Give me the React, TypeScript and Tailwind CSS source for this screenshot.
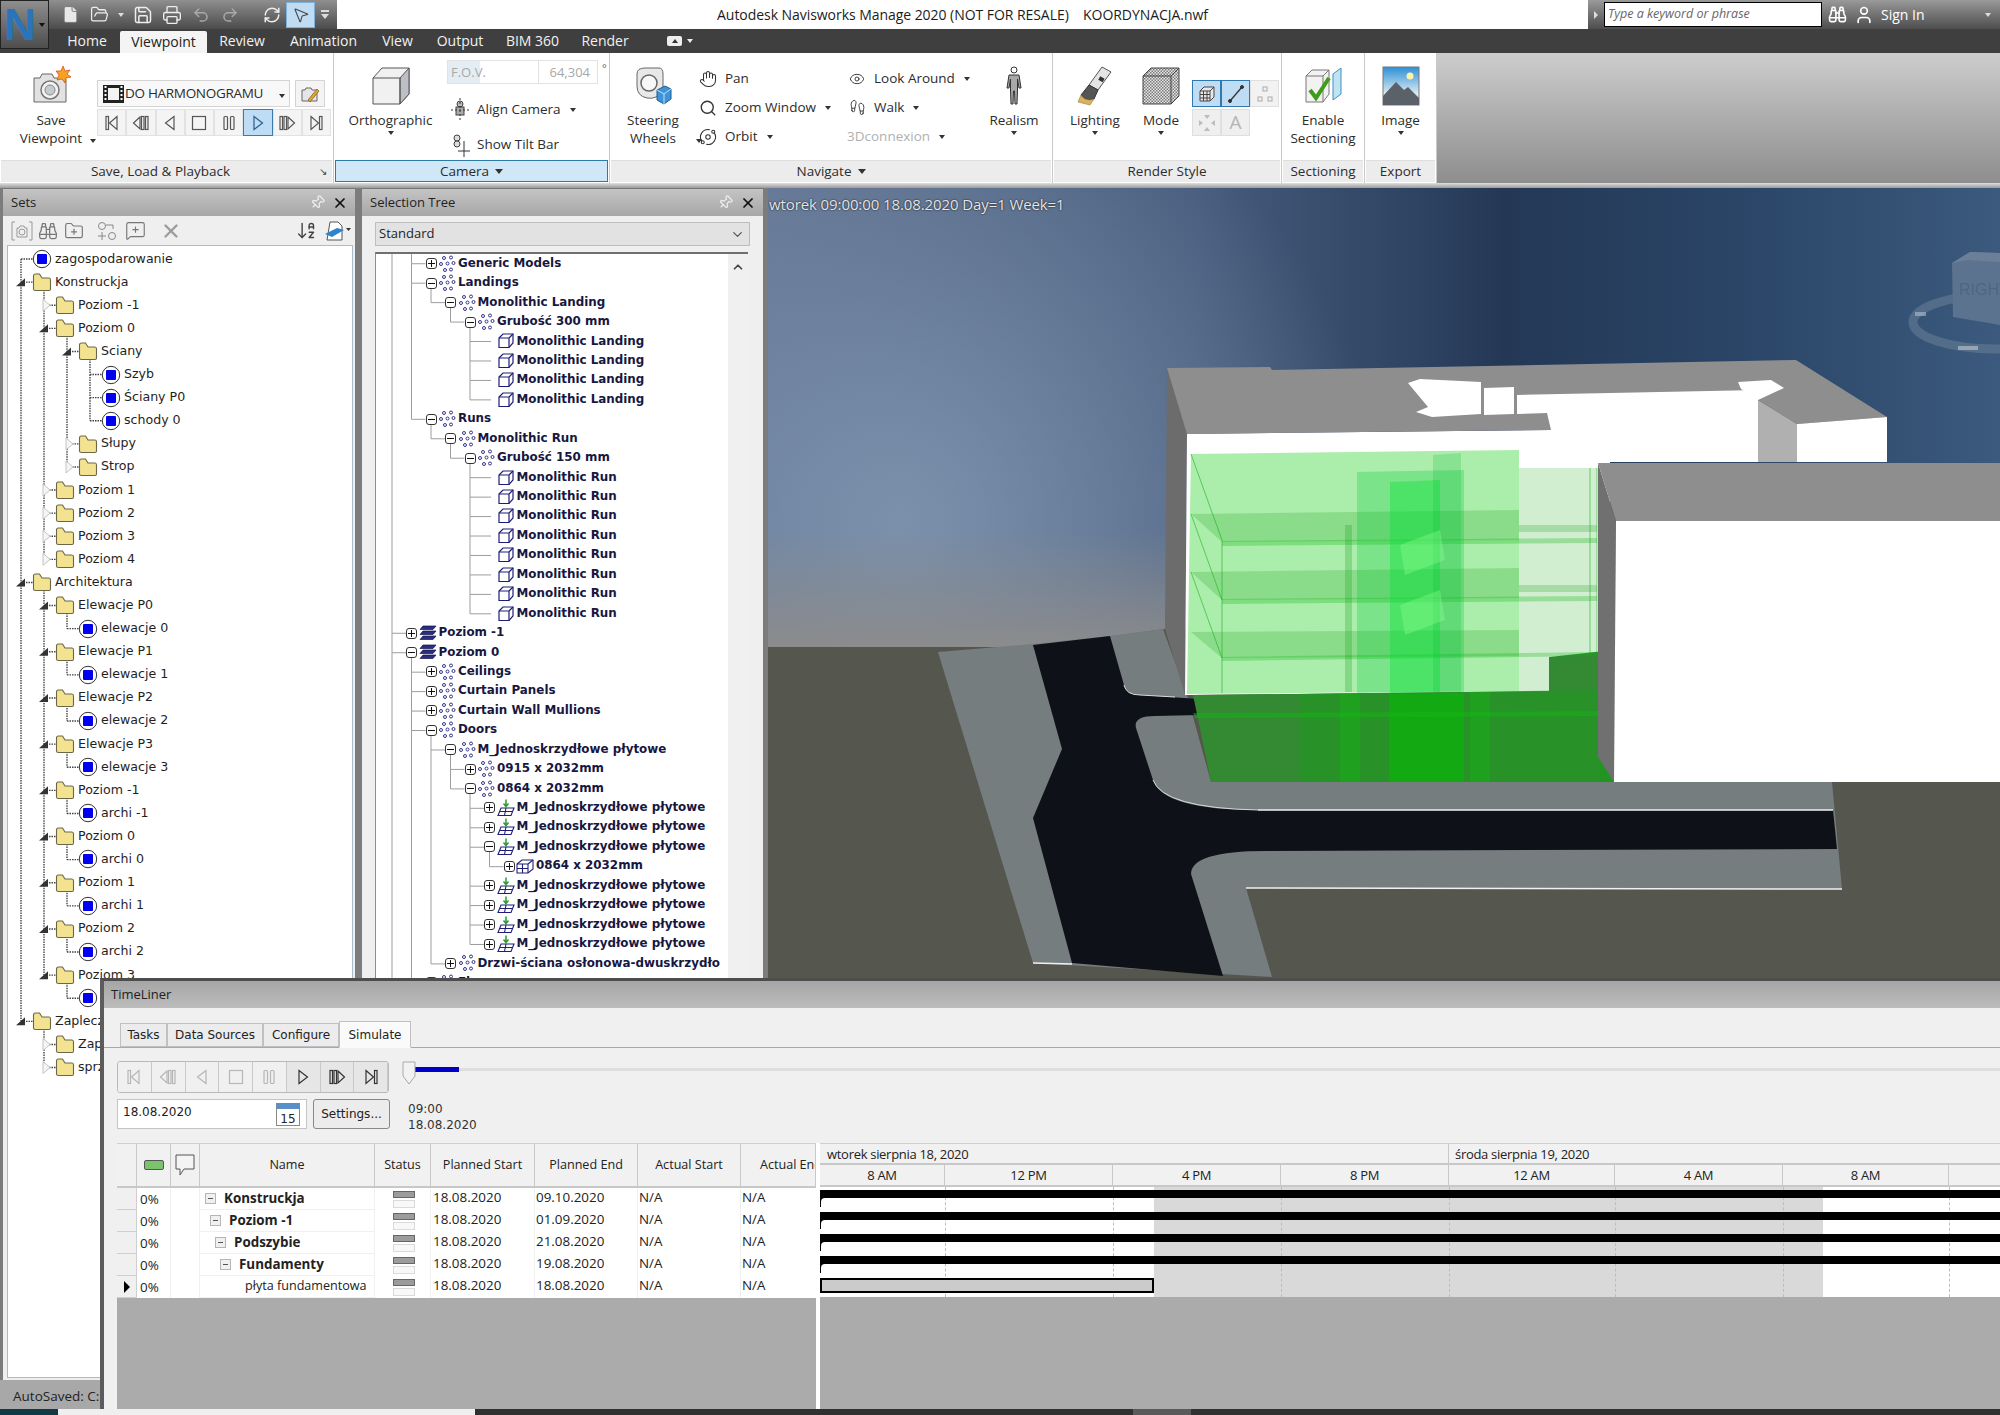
import type { ReactNode } from "react";
import {
  Binoculars, ChevronDown, ChevronUp, File, FolderOpen, FolderPlus, Hand, MessageSquarePlus, MousePointer2, Pin, Printer,
  Redo2, RefreshCw, Save, Search, Undo2, User, X, ArrowDownAZ, Footprints, Eye, Orbit,
} from "lucide-react";

const caret = <span className="inline-block w-0 h-0 border-x-[3px] border-x-transparent border-t-[4px] border-t-[#333]" />;

type Kind = "first" | "prev" | "back" | "stop" | "pause" | "play" | "next" | "last";

function Transport({ kind, color = "#444" }: { kind: Kind; color?: string }) {
  const p = { fill: "none", stroke: color, strokeWidth: 1.2 };
  return (
    <svg width="20" height="20" viewBox="0 0 20 20">
      {kind === "first" && <g {...p}><rect x="4" y="3.5" width="2.5" height="13" /><path d="M15 3.5 L7.5 10 L15 16.5 Z" /></g>}
      {kind === "prev" && <g {...p}><path d="M9 4 L2.5 10 L9 16 Z" /><rect x="10.5" y="3.5" width="2.5" height="13" /><rect x="14.5" y="3.5" width="2.5" height="13" /></g>}
      {kind === "back" && <path {...p} d="M14 3.5 L5.5 10 L14 16.5 Z" />}
      {kind === "stop" && <rect {...p} x="3.5" y="3.5" width="13" height="13" />}
      {kind === "pause" && <g {...p}><rect x="5" y="3.5" width="3.5" height="13" rx="1" /><rect x="11.5" y="3.5" width="3.5" height="13" rx="1" /></g>}
      {kind === "play" && <path {...p} d="M6 3.5 L14.5 10 L6 16.5 Z" />}
      {kind === "next" && <g {...p}><rect x="3" y="3.5" width="2.5" height="13" /><rect x="7" y="3.5" width="2.5" height="13" /><path d="M11 4 L17.5 10 L11 16 Z" /></g>}
      {kind === "last" && <g {...p}><path d="M5 3.5 L12.5 10 L5 16.5 Z" /><rect x="13.5" y="3.5" width="2.5" height="13" /></g>}
    </svg>
  );
}

const kinds: Kind[] = ["first", "prev", "back", "stop", "pause", "play", "next", "last"];

function CameraIcon() {
  return (
    <svg width="40" height="40" viewBox="0 0 40 40">
      <path d="M3 12 L9 12 L11 8 L21 8 L23 12 L33 12 Q35 12 35 14 L35 36 L3 36 Z" fill="#e2e2e2" stroke="#666" />
      <circle cx="19" cy="24" r="9" fill="#f2f2f2" stroke="#777" strokeWidth="1.5" />
      <circle cx="19" cy="24" r="5" fill="#c4ccd0" stroke="#888" />
      <path d="M32 0 L34 5 L39 4 L36 8 L40 11 L35 12 L34 17 L31 13 L26 14 L28 9 L25 5 L30 5 Z" fill="#f6a11f" stroke="#d9401c" strokeWidth=".7" />
    </svg>
  );
}

function OrthoIcon() {
  return (
    <svg width="40" height="40" viewBox="0 0 40 40">
      <path d="M2 12 L11 2 L38 2 L38 28 L29 38 L2 38 Z" fill="#f1f1f1" stroke="#555" />
      <path d="M29 12 L38 2 L38 28 L29 38 Z" fill="#bcc0c6" stroke="#555" />
      <path d="M2 12 L29 12 L29 38" fill="none" stroke="#555" />
    </svg>
  );
}

function WheelIcon() {
  return (
    <svg width="40" height="40" viewBox="0 0 40 40">
      <path d="M4 8 Q4 2 12 2 L26 2 Q30 2 30 8 L30 24 Q24 34 14 32 Q4 30 4 20 Z" fill="#e8e8e8" stroke="#666" />
      <circle cx="16" cy="17" r="8" fill="#f7f7f7" stroke="#666" strokeWidth="1.5" />
      <path d="M24 24 L32 20 L38 23 L38 33 L31 38 L24 34 Z" fill="#3f93d8" stroke="#1c5b91" />
      <path d="M24 24 L31 28 L38 23 M31 28 L31 38" fill="none" stroke="#bfe0f7" />
    </svg>
  );
}

function PersonIcon() {
  return (
    <svg width="24" height="40" viewBox="0 0 24 40" fill="none" stroke="#333">
      <circle cx="12" cy="4" r="3" />
      <path d="M7 9 L17 9 L19 22 L17 22 L15.5 13 L15.5 24 L15 38 L13 38 L12.5 25 L11.5 25 L11 38 L9 38 L8.5 24 L8.5 13 L7 22 L5 22 Z" fill="#a8a8a8" />
    </svg>
  );
}

function TorchIcon() {
  return (
    <svg width="40" height="40" viewBox="0 0 40 40">
      <path d="M27 1 L36 6 L23 24 L14 19 Z" fill="#e4e4e4" stroke="#555" />
      <path d="M14 19 L23 24 L19 33 Q10 36 6 29 Z" fill="#555" stroke="#333" />
      <path d="M6 29 Q10 36 19 33 L15 39 L3 36 Z" fill="#d8b25e" stroke="#9b7c38" strokeWidth=".6" />
      <rect x="24" y="11" width="5" height="4" fill="#333" transform="rotate(30 26 13)" />
    </svg>
  );
}

function ModeIcon() {
  return (
    <svg width="40" height="40" viewBox="0 0 40 40">
      <defs>
        <pattern id="check" width="3" height="3" patternUnits="userSpaceOnUse">
          <rect width="3" height="3" fill="#e6e6e6" />
          <rect width="1.5" height="1.5" fill="#7b7b7b" />
          <rect x="1.5" y="1.5" width="1.5" height="1.5" fill="#7b7b7b" />
        </pattern>
      </defs>
      <path d="M2 10 L10 2 L38 2 L38 30 L30 38 L2 38 Z" fill="url(#check)" stroke="#444" />
      <path d="M2 10 L30 10 L30 38 M30 10 L38 2" fill="none" stroke="#444" />
    </svg>
  );
}

function SectionIcon() {
  return (
    <svg width="40" height="36" viewBox="0 0 40 36">
      <path d="M3 8 L9 2 L26 2 L26 26 L20 34 L3 34 Z" fill="#f2f2f2" stroke="#777" />
      <path d="M3 8 L20 8 L20 34 M20 8 L26 2" fill="none" stroke="#777" />
      <path d="M30 6 L38 0 L38 26 L30 32 Z" fill="#bfe3f3" stroke="#3f8fc0" />
      <path d="M7 22 L13 30 L26 10" fill="none" stroke="#3f9c1b" strokeWidth="4" />
    </svg>
  );
}

function PictureIcon() {
  return (
    <svg width="38" height="40" viewBox="0 0 38 40">
      <defs>
        <linearGradient id="skyg" x1="0" y1="0" x2="0" y2="1">
          <stop offset="0" stopColor="#2e8fd6" />
          <stop offset=".7" stopColor="#d9eaf3" />
        </linearGradient>
      </defs>
      <rect x="1" y="1" width="36" height="38" fill="url(#skyg)" stroke="#777" />
      <circle cx="28" cy="10" r="3.5" fill="#fbf2b0" />
      <path d="M1 30 L14 16 L22 24 L26 21 L37 32 L37 39 L1 39 Z" fill="#5b6168" />
    </svg>
  );
}

function LargeButton({ icon, lines, showCaret, className }: { icon: ReactNode; lines: string[]; showCaret?: boolean; className: string }) {
  return (
    <div className={`flex flex-col items-center shrink-0 ${className}`}>
      <div className="h-[40px] mt-[13px] flex items-center justify-center">{icon}</div>
      <div className="mt-[5px] text-center leading-[18px]">
        {lines.map((l) => <div key={l}>{l}</div>)}
      </div>
      {showCaret && <div className="flex justify-center mt-[2px] leading-[6px]">{caret}</div>}
    </div>
  );
}

function RibbonPanel({ width, title, active, launcher, children }: { width: string; title: ReactNode; active?: boolean; launcher?: boolean; children: ReactNode }) {
  return (
    <div className={`${width} shrink-0 flex flex-col border-r border-[#c9c9c9] bg-white`}>
      <div className="h-[107px] flex">{children}</div>
      <div className={`relative h-[22px] mx-[1px] flex items-center justify-center ${active ? "bg-[#cfe7f6] border border-[#2d7ba8]" : "bg-[#ececec] border-t border-[#dedede]"} ${launcher ? "pr-[12px]" : ""}`}>
        {title}
        {launcher && <span className="absolute right-[5px] top-[5px] text-[10px] leading-none text-[#444]">↘</span>}
      </div>
    </div>
  );
}

function SmallTool({ icon, label, withCaret, disabled }: { icon?: ReactNode; label: string; withCaret?: boolean; disabled?: boolean }) {
  return (
    <div className={`h-[29px] flex items-center ${disabled ? "text-[#b0b0b0]" : ""}`}>
      {icon && <span className="w-[20px] flex justify-center mr-[7px] text-[#333]">{icon}</span>}
      <span>{label}</span>
      {withCaret && <span className="ml-[9px] flex">{caret}</span>}
    </div>
  );
}

function Ribbon() {
  const tb = "w-[29px] h-[27px] flex items-center justify-center border border-[#dfdfdf]";
  return (
    <div className="h-[130px] flex text-[13.5px] text-[#2c2c2c]">
      <RibbonPanel width="w-[334px]" launcher title={<span>Save, Load &amp; Playback</span>}>
        <LargeButton className="w-[80px] ml-[11px]" icon={<CameraIcon />} lines={["Save", "Viewpoint"]} />
        <div className="mt-[75px] ml-[-1px] w-[7px]">{caret}</div>
        <div className="ml-[0px] mt-[27px] w-[236px]">
          <div className="flex gap-[5px] h-[27px]">
            <div className="w-[193px] border border-[#d4d4d4] flex items-center pl-[5px] pr-[4px] bg-[#f8f8f8]">
              <svg width="21" height="18" viewBox="0 0 21 18" className="shrink-0">
                <rect width="21" height="18" fill="#222" />
                <rect x="5" y="3" width="11" height="12" fill="#f3f3f3" />
                <path d="M1.5 2 h2 M1.5 6 h2 M1.5 10 h2 M1.5 14 h2 M17.5 2 h2 M17.5 6 h2 M17.5 10 h2 M17.5 14 h2" stroke="#fff" strokeWidth="2" />
              </svg>
              <span className="ml-[1px] text-[13.5px] whitespace-nowrap tracking-[-0.3px]">DO HARMONOGRAMU</span>
              <span className="ml-auto">{caret}</span>
            </div>
            <div className="w-[30px] border border-[#d4d4d4] bg-[#f4f4f4] flex items-center justify-center">
              <svg width="20" height="20" viewBox="0 0 20 20"><path d="M2 6 h3 l1 -2 h5 l1 2 h5 v11 h-15 Z" fill="#e6e6e6" stroke="#666" /><path d="M8 16 L17 5 L19 7 L10 18 Z" fill="#e0a52e" stroke="#7a5a14" strokeWidth=".7" /></svg>
            </div>
          </div>
          <div className="flex mt-[2px] w-[234px] h-[27px]">
            {kinds.map((k) => (
              <div key={k} className={`flex-1 flex items-center justify-center border ${k === "play" ? "bg-[#bedcf3] border-[#3a7cb0]" : "bg-[#f4f4f4] border-[#e2e2e2]"}`}>
                <Transport kind={k} color={k === "play" ? "#2a5d8c" : "#555"} />
              </div>
            ))}
          </div>
        </div>
      </RibbonPanel>

      <RibbonPanel width="w-[276px]" active title={<span className="flex items-center gap-[6px]">Camera <span className="inline-block w-0 h-0 border-x-[4px] border-x-transparent border-t-[5px] border-t-[#333]" /></span>}>
        <LargeButton className="w-[113px]" icon={<OrthoIcon />} lines={["Orthographic"]} showCaret />
        <div className="w-[160px] pt-[7px]">
          <div className="flex">
            <div className="w-[151px] h-[24px] border border-[#e2e2e2] flex text-[#a8a8a8] text-[13px]">
              <span className="w-[32px] pl-[3px] bg-[#e3edf3] whitespace-nowrap leading-[22px]">F.O.V.</span>
              <span className="w-[58px] whitespace-nowrap leading-[22px] pl-[6px]" />
              <span className="flex-1 text-right border-l border-[#e2e2e2] leading-[22px] pr-[7px]">64,304</span>
            </div>
            <span className="ml-[4px] text-[#666] text-[11px]">°</span>
          </div>
          <div className="mt-[11px] h-[29px] flex items-center pl-[3px]">
            <svg width="20" height="24" viewBox="0 0 20 24" className="mr-[7px]"><circle cx="10" cy="6" r="3" fill="#bbb" stroke="#444" /><rect x="6" y="9" width="8" height="8" fill="#aaa" stroke="#444" /><path d="M10 0 V24 M1 12 H19" stroke="#333" strokeDasharray="2 2" /></svg>
            <span>Align Camera</span><span className="ml-[9px] flex">{caret}</span>
          </div>
          <div className="mt-[6px] h-[29px] flex items-center pl-[3px]">
            <svg width="20" height="24" viewBox="0 0 20 24" className="mr-[7px]"><circle cx="7" cy="5" r="3" fill="#ddd" stroke="#444" /><circle cx="7" cy="11" r="3" fill="#ddd" stroke="#444" /><path d="M14 8 V24 M8 18 H20" stroke="#333" /></svg>
            <span>Show Tilt Bar</span>
          </div>
        </div>
      </RibbonPanel>

      <RibbonPanel width="w-[443px]" title={<span className="flex items-center gap-[6px]">Navigate <span className="inline-block w-0 h-0 border-x-[4px] border-x-transparent border-t-[5px] border-t-[#333]" /></span>}>
        <LargeButton className="w-[86px]" icon={<WheelIcon />} lines={["Steering", "Wheels"]} />
        <div className="mt-[75px] w-[2px]">{caret}</div>
        <div className="w-[149px] pt-[11px]">
          <SmallTool icon={<Hand size={18} strokeWidth={1.4} />} label="Pan" />
          <SmallTool icon={<Search size={18} strokeWidth={1.8} />} label="Zoom Window" withCaret />
          <SmallTool icon={<Orbit size={18} strokeWidth={1.4} />} label="Orbit" withCaret />
        </div>
        <div className="w-[132px] pt-[11px]">
          <SmallTool icon={<Eye size={16} strokeWidth={1.4} />} label="Look Around" withCaret />
          <SmallTool icon={<Footprints size={17} strokeWidth={1.3} />} label="Walk" withCaret />
          <SmallTool label="3Dconnexion" withCaret disabled />
        </div>
        <LargeButton className="w-[70px]" icon={<PersonIcon />} lines={["Realism"]} showCaret />
      </RibbonPanel>

      <RibbonPanel width="w-[229px]" title="Render Style">
        <LargeButton className="w-[84px]" icon={<TorchIcon />} lines={["Lighting"]} showCaret />
        <LargeButton className="w-[48px]" icon={<ModeIcon />} lines={["Mode"]} showCaret />
        <div className="ml-[7px] mt-[27px] grid grid-cols-[29px_29px_29px] auto-rows-[27px] gap-y-[2px]">
          <div className={`${tb} bg-[#bedcf3] !border-[#2f78b0]`}><svg width="20" height="20" viewBox="0 0 20 20" fill="#e8e8e8" stroke="#444"><path d="M3 7 L7 3 L17 3 L17 13 L13 17 L3 17 Z" /><path d="M3 7 H13 V17 M13 7 L17 3 M6.5 7 V17 M10 7 V17 M3 10.5 H13 M3 14 H13" fill="none" /></svg></div>
          <div className={`${tb} bg-[#bedcf3] !border-[#2f78b0]`}><svg width="20" height="20" viewBox="0 0 20 20" stroke="#333"><path d="M4 17 L16 3" strokeWidth="1.3" /><circle cx="4" cy="17" r="1.5" fill="#333" /><circle cx="16" cy="3" r="1.5" fill="#333" /></svg></div>
          <div className={`${tb} bg-[#f2f2f2]`}><svg width="18" height="18" viewBox="0 0 18 18" fill="none" stroke="#aaa"><rect x="7" y="2" width="4" height="4" /><rect x="2" y="12" width="4" height="4" /><rect x="12" y="12" width="4" height="4" /></svg></div>
          <div className={`${tb} bg-[#efefef]`}><svg width="18" height="18" viewBox="0 0 18 18" fill="#bdbdbd"><path d="M6 1 H12 L9 5 Z M6 17 H12 L9 13 Z M1 6 V12 L5 9 Z M17 6 V12 L13 9 Z" /></svg></div>
          <div className={`${tb} bg-[#efefef] text-[#b5b5b5] text-[19px]`}>A</div>
        </div>
      </RibbonPanel>

      <RibbonPanel width="w-[83px]" title="Sectioning">
        <LargeButton className="w-full" icon={<SectionIcon />} lines={["Enable", "Sectioning"]} />
      </RibbonPanel>
      <RibbonPanel width="w-[72px]" title="Export">
        <LargeButton className="w-full" icon={<PictureIcon />} lines={["Image"]} showCaret />
      </RibbonPanel>
      <div className="flex-1 bg-gradient-to-b from-[#cdcdcd] to-[#8e8e8e]" />
    </div>
  );
}

function QuickBar() {
  const slot = "w-[29px] h-[29px] flex items-center justify-center text-[#eeeeee]";
  return (
    <div className="w-[337px] shrink-0 pl-[56px] flex items-center bg-gradient-to-b from-[#8f8f8f] to-[#4c4c4c]">
      <div className={slot}><File size={19} fill="#e8e8e8" strokeWidth={1.2} stroke="#777" /></div>
      <div className={slot}><FolderOpen size={19} strokeWidth={1.6} /></div>
      <div className="w-[14px] flex justify-center"><span className="inline-block w-0 h-0 border-x-[3px] border-x-transparent border-t-[4px] border-t-[#ddd]" /></div>
      <div className={slot}><Save size={20} strokeWidth={1.8} /></div>
      <div className={slot}><Printer size={20} strokeWidth={1.6} /></div>
      <div className={`${slot} !text-[#a9a9a9]`}><Undo2 size={18} strokeWidth={2} /></div>
      <div className={`${slot} !text-[#a9a9a9]`}><Redo2 size={18} strokeWidth={2} /></div>
      <div className="w-[13px]" />
      <div className={slot}><RefreshCw size={18} strokeWidth={2} /></div>
      <div className="w-[29px] h-[26px] bg-[#bfdcf2] border border-[#7fb2d8] flex items-center justify-center text-[#444]"><MousePointer2 size={18} strokeWidth={1.4} /></div>
      <div className="w-[20px] flex flex-col items-center gap-[2px]">
        <span className="w-[8px] h-[2px] bg-[#ddd]" />
        <span className="inline-block w-0 h-0 border-x-[4px] border-x-transparent border-t-[5px] border-t-[#ddd]" />
      </div>
    </div>
  );
}

function Header() {
  const tabs: [string, string][] = [
    ["Home", "w-[66px] ml-[54px]"],
    ["Viewpoint", "w-[87px]"],
    ["Review", "w-[70px]"],
    ["Animation", "w-[93px]"],
    ["View", "w-[55px]"],
    ["Output", "w-[70px]"],
    ["BIM 360", "w-[75px]"],
    ["Render", "w-[70px]"],
  ];
  return (
    <>
      <div className="h-[29px] flex bg-white">
        <QuickBar />
        <div className="flex-1 flex items-center justify-center text-[14px] text-[#1c1c1c] whitespace-pre tracking-[-0.05px]">Autodesk Navisworks Manage 2020 (NOT FOR RESALE)    KOORDYNACJA.nwf</div>
        <div className="w-[412px] shrink-0 flex items-center bg-gradient-to-b from-[#9a9a9a] to-[#4e4e4e] text-[14px] text-white">
          <span className="ml-[6px] inline-block w-0 h-0 border-y-[4px] border-y-transparent border-l-[4px] border-l-[#ddd]" />
          <div className="ml-[6px] w-[218px] h-[25px] bg-white border border-black flex items-center pl-[3px] italic text-[12.5px] text-[#666]">Type a keyword or phrase</div>
          <Binoculars size={19} className="ml-[6px]" strokeWidth={2} />
          <User size={20} className="ml-[7px]" strokeWidth={2} />
          <span className="ml-[7px]">Sign In</span>
          <span className="ml-auto mr-[9px] inline-block w-0 h-0 border-x-[3px] border-x-transparent border-t-[4px] border-t-[#ddd]" />
        </div>
      </div>
      <div className="h-[24px] flex items-end bg-[#3f3f3f] text-[14px] text-[#f2f2f2]">
        {tabs.map(([t, w]) => (
          <div key={t} className={`${w} text-center ${t === "Viewpoint" ? "h-[22px] leading-[21px] bg-[#f4f4f4] text-[#222] rounded-t-[2px]" : "h-[24px] leading-[23px]"}`}>{t}</div>
        ))}
        <div className="ml-[27px] h-[24px] flex items-center gap-[5px]">
          <span className="w-[15px] h-[10px] bg-[#eee] rounded-[2px] flex items-center justify-center"><span className="inline-block w-0 h-0 border-x-[3px] border-x-transparent border-b-[4px] border-b-[#333]" /></span>
          <span className="inline-block w-0 h-0 border-x-[3px] border-x-transparent border-t-[4px] border-t-[#eee]" />
        </div>
      </div>
    </>
  );
}

function Seg({ depths, rowH, top, guide, elbow, fromTop, dotted, color, open }: {
  depths: number[]; rowH: number; top: number; guide: (d: number) => number; elbow: (d: number, i: number) => number;
  fromTop?: boolean; dotted?: boolean; color: string; open?: (i: number) => "open" | "closed" | null;
}) {
  const yOf = (i: number) => top + rowH * (i + 0.5);
  const lines: number[][] = [];
  depths.forEach((d, i) => {
    const y = yOf(i);
    lines.push([guide(d), y, elbow(d, i), y]);
    for (let j = i + 1; j < depths.length; j++) {
      if (depths[j] < d) break;
      if (depths[j] === d) { lines.push([guide(d), y, guide(d), yOf(j)]); break; }
    }
    let k = i - 1;
    while (k >= 0 && depths[k] > d) k--;
    if (k >= 0 && depths[k] < d) lines.push([guide(d), yOf(k), guide(d), y]);
    if (k < 0 && fromTop) lines.push([guide(d), 0, guide(d), y]);
  });
  return (
    <svg className="absolute left-0 top-0 w-full h-[1200px]" fill="none">
      {lines.map((l, i) => (
        <line key={i} x1={l[0]} y1={l[1]} x2={l[2]} y2={l[3]} stroke={color} strokeWidth={dotted ? 1.4 : 1} strokeDasharray={dotted ? "1.5 1" : undefined} />
      ))}
      {open && depths.map((d, i) => {
        const s = open(i);
        if (!s) return null;
        const x = guide(d), y = yOf(i);
        return s === "open"
          ? <path key={i} d={`M${x - 5} ${y + 4} L${x + 4} ${y + 4} L${x + 4} ${y - 4} Z`} fill="#333" />
          : <path key={i} d={`M${x - 1} ${y - 6} L${x + 6} ${y} L${x - 1} ${y + 6} Z`} fill="#f5f5f5" stroke="#c4c4c4" />;
      })}
    </svg>
  );
}

type SetRow = [string, number, "set" | "open" | "closed"];

const setRows: SetRow[] = [
  ["zagospodarowanie", 0, "set"], ["Konstruckja", 0, "open"], ["Poziom -1", 1, "closed"], ["Poziom 0", 1, "open"],
  ["Sciany", 2, "open"], ["Szyb", 3, "set"], ["Ściany P0", 3, "set"], ["schody 0", 3, "set"], ["Słupy", 2, "closed"], ["Strop", 2, "closed"],
  ["Poziom 1", 1, "closed"], ["Poziom 2", 1, "closed"], ["Poziom 3", 1, "closed"], ["Poziom 4", 1, "closed"],
  ["Architektura", 0, "open"], ["Elewacje P0", 1, "open"], ["elewacje 0", 2, "set"], ["Elewacje P1", 1, "open"], ["elewacje 1", 2, "set"],
  ["Elewacje P2", 1, "open"], ["elewacje 2", 2, "set"], ["Elewacje P3", 1, "open"], ["elewacje 3", 2, "set"],
  ["Poziom -1", 1, "open"], ["archi -1", 2, "set"], ["Poziom 0", 1, "open"], ["archi 0", 2, "set"], ["Poziom 1", 1, "open"], ["archi 1", 2, "set"],
  ["Poziom 2", 1, "open"], ["archi 2", 2, "set"], ["Poziom 3", 1, "open"], ["archi 3", 2, "set"],
  ["Zaplecze", 0, "open"], ["Zaplecze", 1, "closed"], ["sprzęt", 1, "closed"],
];

function SetsPanel() {
  return (
    <div className="w-[352px] ml-[3px] shrink-0 flex flex-col">
      <PanelHead title="Sets" />
      <div className="h-[29px] bg-[#efefef] flex items-center pl-[8px] text-[#777] shrink-0">
        <svg width="22" height="22" viewBox="0 0 22 22" fill="none" stroke="#999" className="mr-[5px]"><path d="M4 2 H1 V20 H4 M18 2 H21 V20 H18" /><path d="M6 8 h2 l1 -2 h4 l1 2 h2 v9 H6 Z" /><circle cx="11" cy="12" r="3" /></svg>
        <Binoculars size={20} strokeWidth={1.5} className="mr-[6px]" />
        <FolderPlus size={20} strokeWidth={1.4} className="mr-[12px]" />
        <svg width="22" height="22" viewBox="0 0 22 22" fill="none" stroke="#888" className="mr-[7px]"><circle cx="6" cy="6" r="3.5" /><circle cx="16" cy="16" r="3.5" /><path d="M10 5 H17 V9 M6 12 V20 M2 16 H10" /></svg>
        <MessageSquarePlus size={21} strokeWidth={1.3} className="mr-[14px]" />
        <X size={22} strokeWidth={2.6} className="text-[#9c9c9c]" />
        <ArrowDownAZ size={21} strokeWidth={1.6} className="ml-auto mr-[7px] text-[#444]" />
        <svg width="28" height="22" viewBox="0 0 28 22" className="mr-[3px]"><path d="M6 2 H14 L18 6 V20 H3 Z" fill="#fff" stroke="#555" /><path d="M1 14 L13 8 L20 10 L8 17 Z" fill="#2f83cc" /><path d="M22 8 h5 l-2.5 3 Z" fill="#333" /></svg>
      </div>
      <div className="flex-1 flex flex-col min-h-0 bg-[#efefef] pl-[4px] pr-[2px]">
        <div className="relative h-[1133px] bg-white border border-[#a9bccb] overflow-hidden pt-[1.5px] font-['DejaVu_Sans',sans-serif] text-[12.6px] text-[#1f1f1f]">
          <Seg
            depths={setRows.map((r) => r[1])} rowH={23.1} top={1.5} dotted color="#444"
            guide={(d) => 13 + 23 * d} elbow={(d) => 25 + 23 * d}
            open={(i) => (setRows[i][2] === "set" ? null : (setRows[i][2] as "open" | "closed"))}
          />
          {setRows.map((r, i) => (
            <div key={i} className="relative h-[23.1px] flex items-center whitespace-nowrap" style={{ paddingLeft: 25 + 23 * r[1] }}>
              {r[2] === "set" ? (
                <svg width="20" height="20" viewBox="0 0 20 20" className="shrink-0 mr-[3px] -ml-[1px]"><circle cx="10" cy="10" r="8.7" fill="#fff" stroke="#333" /><rect x="5" y="5" width="10" height="10" rx="1" fill="#0000ee" /></svg>
              ) : (
                <svg width="20" height="20" viewBox="0 0 20 20" className="shrink-0 mr-[3px] -ml-[1px]"><path d="M1.5 4 Q1.5 2 3.5 2 L7.5 2 L10 6 L17 6 Q18.5 6 18.5 8 L18.5 17 Q18.5 18.5 17 18.5 L3.5 18.5 Q1.5 18.5 1.5 17 Z" fill="#f3e391" stroke="#6b6645" strokeWidth="1.1" /></svg>
              )}
              <span>{r[0]}</span>
            </div>
          ))}
        </div>
        <div className="h-[2px] bg-[#efefef]" />
      </div>
      <div className="h-[29px] shrink-0 bg-[#a8a8a8] ml-[-3px] mr-[-2px] pl-[13px] pt-[4px] flex items-center text-[13.5px] text-[#222]">AutoSaved: C:</div>
    </div>
  );
}

function PanelHead({ title }: { title: string }) {
  return (
    <div className="h-[28px] shrink-0 bg-gradient-to-b from-[#c4c4c4] to-[#a7a7a7] border-t border-[#777] flex items-center pl-[8px] text-[13px] text-[#222]">
      <span>{title}</span>
      <Pin size={15} className="ml-auto text-[#eee] rotate-45" strokeWidth={2} />
      <X size={16} strokeWidth={2.6} className="ml-[7px] mr-[7px] text-[#111]" />
    </div>
  );
}

type TreeKind = "group" | "leaf" | "layer" | "model" | "geom";
type TreeRow = [string, number, TreeKind, "+" | "-" | null];

const ML = "Monolithic Landing";
const MR = "Monolithic Run";
const MJ = "M_Jednoskrzydłowe płytowe";
const treeRows: TreeRow[] = [
  ["Generic Models", 1, "group", "+"], ["Landings", 1, "group", "-"], [ML, 2, "group", "-"], ["Grubość 300 mm", 3, "group", "-"],
  [ML, 4, "leaf", null], [ML, 4, "leaf", null], [ML, 4, "leaf", null], [ML, 4, "leaf", null],
  ["Runs", 1, "group", "-"], [MR, 2, "group", "-"], ["Grubość 150 mm", 3, "group", "-"],
  [MR, 4, "leaf", null], [MR, 4, "leaf", null], [MR, 4, "leaf", null], [MR, 4, "leaf", null],
  [MR, 4, "leaf", null], [MR, 4, "leaf", null], [MR, 4, "leaf", null], [MR, 4, "leaf", null],
  ["Poziom -1", 0, "layer", "+"], ["Poziom 0", 0, "layer", "-"], ["Ceilings", 1, "group", "+"], ["Curtain Panels", 1, "group", "+"],
  ["Curtain Wall Mullions", 1, "group", "+"], ["Doors", 1, "group", "-"], [MJ, 2, "group", "-"],
  ["0915 x 2032mm", 3, "group", "+"], ["0864 x 2032mm", 3, "group", "-"],
  [MJ, 4, "model", "+"], [MJ, 4, "model", "+"], [MJ, 4, "model", "-"], ["0864 x 2032mm", 5, "geom", "+"],
  [MJ, 4, "model", "+"], [MJ, 4, "model", "+"], [MJ, 4, "model", "+"], [MJ, 4, "model", "+"],
  ["Drzwi-ściana osłonowa-dwuskrzydło", 2, "group", "+"], ["Floors", 1, "group", "+"], ["Poziom 1", 0, "layer", "+"],
];

function TreeIcon({ kind }: { kind: TreeKind }) {
  const p = { width: 18, height: 18, viewBox: "0 0 18 18", className: "shrink-0" };
  if (kind === "group") {
    const dots = [[6, 3], [13, 2.5], [3, 9], [9.5, 8.5], [15.5, 8], [7, 15], [13, 14.5]];
    return <svg {...p}>{dots.map((c, i) => <circle key={i} cx={c[0]} cy={c[1]} r="1.5" fill="#fff" stroke="#34348c" strokeWidth="1" />)}</svg>;
  }
  if (kind === "leaf") {
    return <svg {...p} fill="#fff" stroke="#1e1e78" strokeWidth="1.2"><path d="M2 6 L6 2 L16 2 L16 11 L12 15.5 L2 15.5 Z" /><path d="M2 6 H12 V15.5 M12 6 L16 2" fill="none" /></svg>;
  }
  if (kind === "layer") {
    return <svg {...p} fill="#2c2c80" stroke="#15154c" strokeWidth=".7"><path d="M4 2 H17 L14 5.5 H1 Z" /><path d="M4 7 H17 L14 10.5 H1 Z" /><path d="M4 12 H17 L14 15.5 H1 Z" /></svg>;
  }
  if (kind === "model") {
    return <svg {...p}><path d="M9 0.5 V7 M6.5 4.5 L9 7.5 L11.5 4.5" fill="none" stroke="#2b9c32" strokeWidth="1.5" /><path d="M4 9 H17 L14 16.5 H1 Z M3 12.5 H15.5 M9 9 L7.5 16.5" fill="#fff" stroke="#1e1e78" strokeWidth="1.1" /></svg>;
  }
  return <svg {...p} fill="#fff" stroke="#1e1e78" strokeWidth="1.1"><path d="M1 7 L6 3 H17 V12 L12 16 H1 Z" /><path d="M1 7 H12 V16 M12 7 L17 3 M1 11.5 H12 M6.5 7 V16" fill="none" /></svg>;
}

function SelectionPanel() {
  return (
    <div className="w-[401px] ml-[7px] shrink-0 flex flex-col bg-[#efefef]">
      <PanelHead title="Selection Tree" />
      <div className="mx-[13px] mt-[6px] h-[24px] bg-[#e2e2e2] border border-[#bdbdbd] flex items-center pl-[3px] text-[13px] text-[#222] shrink-0">
        <span>Standard</span>
        <ChevronDown size={15} className="ml-auto mr-[4px] text-[#555]" />
      </div>
      <div className="relative mx-[13px] mr-[15px] mt-[6px] h-[726px] bg-white border-t-2 border-[#6f6f6f] border-l border-l-[#8c8c8c] overflow-hidden font-['DejaVu_Sans',sans-serif] font-bold text-[11.9px] text-[#17173f]">
        <Seg
          depths={treeRows.map((r) => r[1])} rowH={19.45} top={0} fromTop color="#9d9d9d"
          guide={(d) => 16 + 19.5 * d} elbow={(d, i) => (treeRows[i][3] ? 30 + 19.5 * d : 37 + 19.5 * d)}
        />
        {treeRows.map((r, i) => (
          <div key={i} className="relative h-[19.45px] flex items-center whitespace-nowrap" style={{ paddingLeft: 30 + 19.5 * r[1] }}>
            {r[3] ? (
              <span className="w-[11px] h-[11px] shrink-0 bg-white border border-[#333] rounded-[3px] flex items-center justify-center relative">
                <span className="absolute w-[7px] h-[1px] bg-[#111]" />
                {r[3] === "+" && <span className="absolute w-[1px] h-[7px] bg-[#111]" />}
              </span>
            ) : <span className="w-[11px] shrink-0" />}
            <span className="ml-[1.5px] flex"><TreeIcon kind={r[2]} /></span>
            <span className="ml-[2px]">{r[0]}</span>
          </div>
        ))}
        <div className="absolute right-0 top-0 bottom-0 w-[20px] bg-[#f0f0f0] flex justify-center pt-[6px]"><ChevronUp size={14} strokeWidth={3} className="text-[#444]" /></div>
      </div>
    </div>
  );
}

function Scene() {
  return (
    <svg viewBox="768 188 1232 790" className="w-[1232px] h-[790px] block">
      <defs>
        <linearGradient id="skyBase" gradientUnits="userSpaceOnUse" x1="768" y1="188" x2="2000" y2="188">
          <stop offset="0" stopColor="#5f7190" />
          <stop offset=".35" stopColor="#475c7d" />
          <stop offset=".6" stopColor="#243856" />
          <stop offset=".8" stopColor="#2b4668" />
          <stop offset="1" stopColor="#3b5a7d" />
        </linearGradient>
        <radialGradient id="skyGlow" gradientUnits="userSpaceOnUse" cx="900" cy="520" r="480">
          <stop offset="0" stopColor="#7d93ad" stopOpacity=".95" />
          <stop offset="1" stopColor="#7d93ad" stopOpacity="0" />
        </radialGradient>
        <linearGradient id="skyFade" gradientUnits="userSpaceOnUse" x1="0" y1="530" x2="0" y2="650">
          <stop offset="0" stopColor="#8c8c8c" stopOpacity="0" />
          <stop offset="1" stopColor="#8c8c8c" stopOpacity="1" />
        </linearGradient>
      </defs>
      <rect x="768" y="188" width="1232" height="470" fill="url(#skyBase)" />
      <rect x="768" y="188" width="1232" height="470" fill="url(#skyGlow)" />
      <rect x="768" y="530" width="1232" height="130" fill="url(#skyFade)" />

      {/* view cube */}
      <ellipse cx="1995" cy="322" rx="82" ry="27" fill="none" stroke="#5f7690" strokeWidth="9" opacity=".7" />
      <path d="M1952 263 L1970 252 L2000 253 L2000 325 L1953 317 Z" fill="#5c7390" />
      <path d="M1952 263 L1970 252 L2000 253 L2000 262 L1968 260 Z" fill="#6b8098" />
      <text x="1959" y="295" fontSize="16" fontFamily="Liberation Sans" fill="#4f6680">RIGHT</text>
      <rect x="1915" y="312" width="11" height="4" fill="#c6d0da" opacity=".5" />
      <rect x="1958" y="346" width="20" height="4" fill="#d5dce3" opacity=".5" />

      {/* ground and road */}
      <path d="M768 647 L1030 647 L1165 629 L2000 629 L2000 978 L768 978 Z" fill="#55574f" />
      <path d="M938 652 L1033 644 L1110 636 L1163 629 L1187 695 L1211 782 L1832 782 L1842 889 L1246 888 L1272 977 L1033 963 Z" fill="#757d7f" />
      <path d="M1033 645 L1110 636 L1124 685 Q1126 695 1140 695 L1199 699 L1200 715 L1155 716 Q1133 716 1136 728 L1153 780 Q1163 810 1258 810 L1833 810 L1837 849 L1266 851 Q1191 851 1191 874 L1223 976 L1072 963 L1033 818 L1062 749 Z" fill="#0e1118" />
      <path d="M1258 810 L1833 810 M1246 888 L1842 889 M1033 963 L1072 964" stroke="#f1f1f1" strokeWidth="1.5" fill="none" />
      <path d="M1153 780 Q1163 808 1258 810 M1124 685 Q1126 695 1140 695 L1175 697" stroke="#d8d8d8" fill="none" />

      {/* back building */}
      <path d="M1167 368 L1187 434 L1185 695 L1165 629 Z" fill="#6c6c6c" />
      <path d="M1187 434 L1551 430 L1551 462 L1610 462 L1610 691 L1185 695 Z" fill="#ffffff" />
      <path d="M1167 368 L1270 367 L1272 370 L1796 360 L1887 417 L1797 424 L1758 400 L1758 462 L1551 462 L1551 430 L1187 434 Z" fill="#8e8e8e" />
      <path d="M1408 383 L1420 379 L1481 382 L1481 414 L1432 417 L1416 412 L1428 407 Z" fill="#fff" />
      <path d="M1484 388 L1514 387 L1514 414 L1484 415 Z" fill="#fff" />
      <path d="M1517 395 L1758 390 L1758 462 L1551 462 L1551 430 L1547 413 L1517 414 Z" fill="#fff" />
      <path d="M1738 382 L1771 380 L1784 388 L1758 400 L1741 389 Z" fill="#fff" />
      <path d="M1758 400 L1797 424 L1797 462 L1758 462 Z" fill="#b0b0b0" />
      <path d="M1797 424 L1887 417 L1887 462 L1797 462 Z" fill="#fff" />

      {/* green phase */}
      <path d="M1193 695 L1549 691 L1549 657 L1614 650 L1614 782 L1211 782 Z" fill="#338a33" />
      <path d="M1300 694 L1600 690 L1600 782 L1300 782 Z" fill="#1f971f" opacity=".55" />
      <path d="M1340 694 L1360 694 L1360 782 L1340 782 Z M1470 692 L1490 692 L1490 782 L1470 782 Z" fill="#16b016" opacity=".5" />
      <path d="M1389 694 L1464 693 L1464 782 L1389 782 Z" fill="#13a913" />
      <path d="M1193 713 L1614 711 L1614 716 L1195 718 Z" fill="#14b614" opacity=".5" />
      <path d="M1600 650 L1614 650 L1614 782 L1600 782 Z" fill="#0fa00f" opacity=".5" />
      <path d="M1191 454 L1519 450 L1519 691 L1187 694 Z" fill="#00c800" opacity=".33" />
      <path d="M1519 468 L1597 468 L1597 654 L1549 657 L1549 691 L1519 691 Z" fill="#0aa50a" opacity=".19" />
      <path d="M1191 514 L1519 510 L1519 540 L1222 542 Z" fill="#0a9c0a" opacity=".2" />
      <path d="M1191 572 L1519 568 L1519 598 L1222 600 Z" fill="#0a9c0a" opacity=".2" />
      <path d="M1191 632 L1519 630 L1519 656 L1222 658 Z" fill="#0a9c0a" opacity=".2" />
      <path d="M1222 541 L1597 538 L1597 543 L1222 546 Z M1222 599 L1597 596 L1597 601 L1222 604 Z M1222 657 L1597 652 L1597 656 L1222 661 Z" fill="#0ab40a" opacity=".28" />
      <path d="M1519 525 L1597 525 L1597 532 L1519 532 Z M1519 585 L1597 585 L1597 592 L1519 592 Z" fill="#0a9c0a" opacity=".22" />
      <path d="M1357 472 L1464 470 L1464 692 L1357 693 Z" fill="#00c832" opacity=".28" />
      <path d="M1390 482 L1440 480 L1440 692 L1390 693 Z" fill="#00e632" opacity=".38" />
      <path d="M1433 455 L1461 453 L1461 692 L1433 692 Z" fill="#00b830" opacity=".2" />
      <path d="M1345 525 L1352 525 L1352 692 L1345 692 Z" fill="#0a9c0a" opacity=".25" />
      <path d="M1400 545 L1440 530 L1445 560 L1405 575 Z M1400 605 L1440 590 L1445 620 L1405 635 Z" fill="#90ff90" opacity=".35" />
      <path d="M1191 454 L1222 540 L1222 693 M1191 514 L1222 600 M1191 572 L1222 658 M1597 468 L1597 654 M1590 468 L1590 654" stroke="#11ad11" strokeOpacity=".55" fill="none" />

      {/* front building */}
      <path d="M1598 463 L1616 521 L1614 782 L1598 757 Z" fill="#707070" />
      <path d="M1598 463 L2000 463 L2000 521 L1616 521 Z" fill="#8e8e8e" />
      <path d="M1616 521 L2000 521 L2000 782 L1614 782 Z" fill="#ffffff" />
    </svg>
  );
}

function Viewport() {
  return (
    <div className="relative ml-[5px] flex-1 min-w-0 overflow-hidden">
      <Scene />
      <div className="absolute left-[1px] top-[7px] text-[15px] leading-[18px] text-[#e6e6e6] whitespace-nowrap [text-shadow:0_0_2px_#000] tracking-[-0.1px]">wtorek 09:00:00 18.08.2020 Day=1 Week=1</div>
    </div>
  );
}

const gridCols = ["w-[20px]", "w-[34px]", "w-[29px]", "w-[175px]", "w-[56px]", "w-[104px]", "w-[103px]", "w-[103px]", "w-[75px]"];

const gridRows = [
  { name: "Konstruckja", pad: "pl-[5px]", end: "09.10.2020", bold: true },
  { name: "Poziom -1", pad: "pl-[10px]", end: "01.09.2020", bold: true },
  { name: "Podszybie", pad: "pl-[15px]", end: "21.08.2020", bold: true },
  { name: "Fundamenty", pad: "pl-[20px]", end: "19.08.2020", bold: true },
  { name: "płyta fundamentowa", pad: "pl-[45px]", end: "18.08.2020", bold: false },
];

function TaskGrid() {
  const head = "h-[44px] shrink-0 flex items-center justify-center border-r border-b-2 border-[#c8c8c8] bg-[#f1f1f1] overflow-hidden";
  return (
    <div className="w-[699px] shrink-0 flex flex-col bg-[#ababab]">
      <div className="flex text-[12.6px] text-[#222] border-t border-[#cfcfcf]">
        <div className={`${head} ${gridCols[0]}`} />
        <div className={`${head} ${gridCols[1]}`}>
          <span className="w-[20px] h-[10px] border border-[#555] rounded-[2px] bg-[#7cc36d]" />
        </div>
        <div className={`${head} ${gridCols[2]}`}>
          <svg width="22" height="24" viewBox="0 0 22 24"><path d="M2 2 H20 V16 H10 L6 22 V16 H2 Z" fill="#f4f4f4" stroke="#555" /></svg>
        </div>
        <div className={`${head} ${gridCols[3]}`}>Name</div>
        <div className={`${head} ${gridCols[4]}`}>Status</div>
        <div className={`${head} ${gridCols[5]}`}>Planned Start</div>
        <div className={`${head} ${gridCols[6]}`}>Planned End</div>
        <div className={`${head} ${gridCols[7]}`}>Actual Start</div>
        <div className={`${head} ${gridCols[8]} !justify-start`}><span className="w-[100px] shrink-0 text-center whitespace-nowrap">Actual End</span></div>
      </div>
      {gridRows.map((r, i) => (
        <div key={r.name} className="flex h-[22px] text-[13.4px] text-[#222]">
          <div className={`${gridCols[0]} bg-[#f0f0f0] border-r border-b border-[#cfcfcf] flex items-center justify-center`}>
            {i === 4 && <span className="inline-block w-0 h-0 border-y-[6px] border-y-transparent border-l-[6px] border-l-black" />}
          </div>
          <div className={`${gridCols[1]} bg-white pl-[3px] leading-[23px] border-r border-[#f0f0f0]`}>0%</div>
          <div className={`${gridCols[2]} bg-white border-r border-[#f0f0f0]`} />
          <div className={`${gridCols[3]} bg-white flex items-center border-r border-b border-[#f0f0f0] ${r.pad} ${r.bold ? "font-bold" : "text-[12.6px]"} whitespace-nowrap`}>
            {r.bold ? (
              <span className="w-[11px] h-[11px] mr-[8px] border border-[#b5b5b5] bg-[#f0f0f0] flex items-center justify-center shrink-0"><span className="w-[5px] h-[1px] bg-[#555]" /></span>
            ) : null}
            <span>{r.name}</span>
          </div>
          <div className={`${gridCols[4]} bg-white pl-[18px] pt-[3px] border-r border-[#f0f0f0]`}>
            <div className="w-[22px] h-[7px] bg-[#9c9c9c] border border-[#666]" />
            <div className="w-[22px] h-[8px] mt-[2px] bg-[#f8f8f8] border border-[#dadada]" />
          </div>
          <div className={`${gridCols[5]} bg-white pl-[2px] leading-[19px] border-r border-[#f0f0f0]`}>18.08.2020</div>
          <div className={`${gridCols[6]} bg-white pl-[1px] leading-[19px] border-r border-[#f0f0f0]`}>{r.end}</div>
          <div className={`${gridCols[7]} bg-white pl-[1px] leading-[19px] border-r border-[#f0f0f0]`}>N/A</div>
          <div className={`${gridCols[8]} bg-white pl-[1px] leading-[19px]`}>N/A</div>
        </div>
      ))}
    </div>
  );
}

const hourCells: [string, string][] = [
  ["8 AM", "w-[125px]"], ["12 PM", "w-[168px]"], ["4 PM", "w-[168px]"], ["8 PM", "w-[168px]"],
  ["12 AM", "w-[166px]"], ["4 AM", "w-[168px]"], ["8 AM", "w-[166px]"],
];
const ticks = ["left-[125px]", "left-[293px]", "left-[461px]", "left-[629px]", "left-[795px]", "left-[963px]", "left-[1129px]"];

function Gantt() {
  return (
    <div className="flex-1 min-w-0 ml-[4px] flex flex-col bg-[#ababab]">
      <div className="h-[22px] flex bg-[#f1f1f1] border-t border-[#cfcfcf] border-b-2 border-b-[#c8c8c8] text-[13px] text-[#222] tracking-[-0.3px]">
        <div className="w-[629px] pl-[7px] border-r border-[#c8c8c8] leading-[20px]">wtorek sierpnia 18, 2020</div>
        <div className="flex-1 pl-[6px] leading-[20px]">środa sierpnia 19, 2020</div>
      </div>
      <div className="h-[22px] flex bg-[#f1f1f1] border-b-2 border-[#c8c8c8] text-[13px] text-[#222] tracking-[-0.3px]">
        {hourCells.map(([t, w], i) => <div key={i} className={`${w} shrink-0 text-center leading-[21px] border-r border-[#c8c8c8]`}>{t}</div>)}
      </div>
      <div className="relative h-[110px] bg-white">
        <div className="absolute left-[334px] w-[669px] top-0 bottom-0 bg-[#d9d9d9]" />
        {ticks.map((t) => <div key={t} className={`absolute ${t} top-0 bottom-0 border-l border-dashed border-[#bdbdbd]`} />)}
        {[0, 1, 2, 3].map((i) => (
          <div key={i} className="relative h-[22px]">
            <div className="absolute left-0 right-0 top-[3px] h-[8px] bg-black" />
            <div className="absolute left-0 top-[11px] w-[5px] h-[9px] bg-black">
              <div className="absolute left-[1px] top-0 w-[4px] h-[9px] bg-white rounded-tl-[4px]" />
            </div>
          </div>
        ))}
        <div className="relative h-[22px]">
          <div className="absolute left-0 top-[3px] w-[334px] h-[15px] border-2 border-black bg-[#cbcbcb]" />
        </div>
      </div>
    </div>
  );
}

function TimeLiner() {
  const tab = "h-[24px] flex items-center justify-center border border-[#c0c0c0] bg-[#ececec]";
  return (
    <div className="absolute z-20 left-[100px] right-0 top-[978px] bottom-[6px] flex flex-col border-l-[4px] border-l-[#5c5c5c] border-t-[3px] border-t-[#4d4d4d] bg-[#f0f0f0] text-[#222]">
      <div className="h-[27px] shrink-0 flex items-center pl-[7px] text-[13px] bg-gradient-to-b from-[#a6a6a6] to-[#bcbcbc]">TimeLiner</div>
      <div className="h-[40px] shrink-0 pl-[16px] flex items-end border-b border-[#a8a8a8] text-[12px] font-['DejaVu_Sans',sans-serif]">
        <div className={`${tab} w-[47px]`}>Tasks</div>
        <div className={`${tab} w-[96px]`}>Data Sources</div>
        <div className={`${tab} w-[76px]`}>Configure</div>
        <div className={`${tab} !h-[27px] w-[72px] !bg-[#fafafa] -mb-[1px] !border-b-[#fafafa]`}>Simulate</div>
      </div>
      <div className="flex h-[32px] mt-[13px] ml-[13px] shrink-0">
        <div className="w-[272px] flex rounded-[3px] border border-[#b9b9b9] overflow-hidden">
          {kinds.map((k, i) => (
            <div key={k} className={`flex-1 flex items-center justify-center border-r border-[#c9c9c9] ${i > 4 ? "bg-[#e6e6e6]" : "bg-[#f0f0f0]"}`}>
              <Transport kind={k} color={i > 4 ? "#333" : "#b6b6b6"} />
            </div>
          ))}
        </div>
        <div className="relative flex-1 ml-[13px]">
          <div className="absolute left-[10px] right-0 top-[7px] h-[3px] bg-[#dedede]" />
          <div className="absolute left-[12px] top-[6px] w-[45px] h-[5px] bg-[#0000c8]" />
          <svg width="14" height="24" viewBox="0 0 14 24" className="absolute left-0 top-0"><path d="M1 1 H13 V15 L7 23 L1 15 Z" fill="#f2f2f2" stroke="#a8a8a8" /></svg>
        </div>
      </div>
      <div className="flex h-[30px] mt-[6px] ml-[13px] shrink-0 text-[12px] font-['DejaVu_Sans',sans-serif]">
        <div className="w-[190px] bg-white border border-[#c4c4c4] flex items-start pl-[5px] pt-[3px] relative">
          18.08.2020
          <span className="absolute right-[6px] top-[3px] w-[24px] h-[23px] border border-[#888] bg-white text-center text-[12px] leading-[20px] border-t-[6px] border-t-[#5a8fc7]">15</span>
        </div>
        <div className="ml-[6px] w-[77px] border border-[#888] rounded-[3px] bg-[#ececec] flex items-center justify-center">Settings...</div>
        <div className="ml-[18px] text-[#333] leading-[16px] pt-[2px]">
          <div>09:00</div>
          <div>18.08.2020</div>
        </div>
      </div>
      <div className="flex-1 min-h-0 flex ml-[13px] mt-[14px] bg-white">
        <TaskGrid />
        <Gantt />
      </div>
    </div>
  );
}

export default function App() {
  return (
    <div className="relative w-[2000px] h-[1415px] overflow-hidden flex flex-col bg-[#7c7c7c] font-['Open_Sans',sans-serif]">
      <Header />
      <Ribbon />
      <div className="h-[5px] bg-gradient-to-b from-[#e0e0e0] to-[#9a9a9a]" />
      <div className="flex-1 min-h-0 flex">
        <SetsPanel />
        <SelectionPanel />
        <Viewport />
      </div>
      <div className="h-[6px] flex shrink-0">
        <div className="w-[58px] bg-[#123a44]" />
        <div className="w-[417px] bg-[#efefef]" />
        <div className="w-[658px] bg-[#303030]" />
        <div className="w-[58px] bg-[#5a5a5a]" />
        <div className="flex-1 bg-[#303030]" />
      </div>
      <div className="absolute left-0 top-0 w-[49px] h-[49px] bg-gradient-to-b from-[#8e8e8e] to-[#4e4e4e] border border-[#222] flex items-center text-[#2a74bb] font-bold text-[44px] leading-none pl-[3px] font-['Liberation_Sans',sans-serif]">
        N
        <span className="absolute right-[3px] top-[22px] w-0 h-0 border-x-[3px] border-x-transparent border-t-[4px] border-t-[#111]" />
      </div>
      <TimeLiner />
    </div>
  );
}
